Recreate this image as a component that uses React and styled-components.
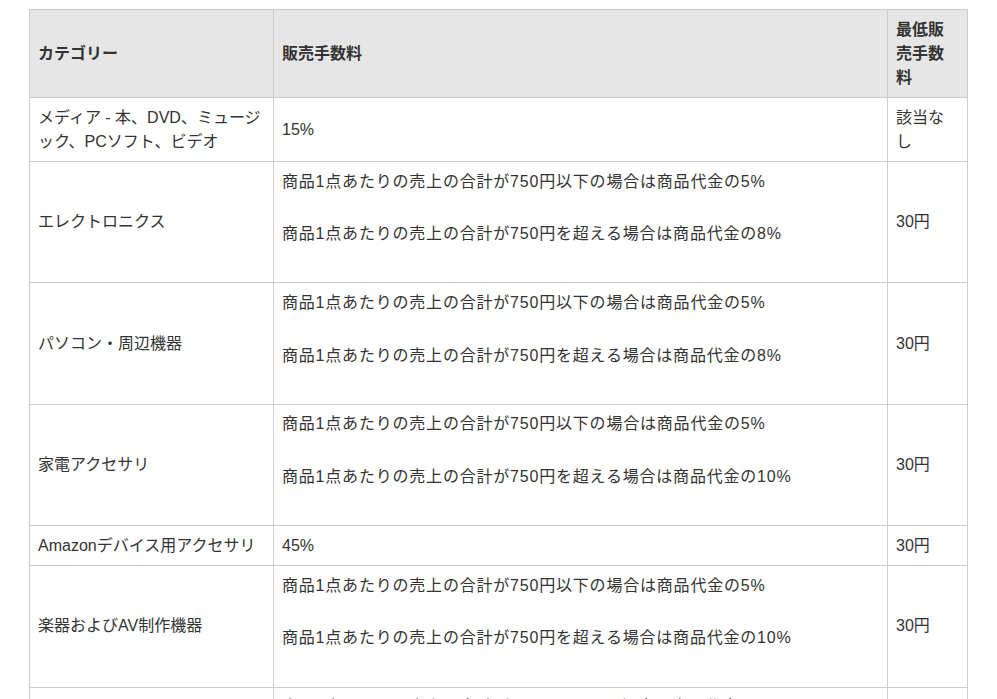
import React from "react";
import styled, { createGlobalStyle } from "styled-components";

const Global = createGlobalStyle`
  html, body { margin: 0; padding: 0; background: #fff; }
  body {
    font-family: "Liberation Sans", "Noto Sans CJK JP", Arial, sans-serif;
    color: #333;
  }
`;

const Page = styled.div`
  padding: 9px 30px 0 29px;
`;

const Table = styled.table`
  width: 939px;
  border-collapse: collapse;
  table-layout: fixed;
  font-size: 16px;
  line-height: 24px;
`;

const Col = styled.col`
  width: ${(p) => p.$w}px;
`;

const Th = styled.th`
  background: #e6e6e6;
  border: 1px solid #ccc;
  padding: 7.5px 8px;
  text-align: left;
  vertical-align: middle;
  font-weight: bold;
  color: #333;
`;

const Td = styled.td`
  border: 1px solid #ccc;
  padding: 7.5px 8px;
  vertical-align: middle;
  color: #333;
`;

const Para = styled.p`
  margin: 0 0 28.7px;
  letter-spacing: 0.8px;
`;

const rows = [
  { cat: "メディア - 本、DVD、ミュージック、PCソフト、ビデオ", fee: ["15%"], min: "該当なし", single: true },
  { cat: "エレクトロニクス", fee: ["商品1点あたりの売上の合計が750円以下の場合は商品代金の5%", "商品1点あたりの売上の合計が750円を超える場合は商品代金の8%"], min: "30円" },
  { cat: "パソコン・周辺機器", fee: ["商品1点あたりの売上の合計が750円以下の場合は商品代金の5%", "商品1点あたりの売上の合計が750円を超える場合は商品代金の8%"], min: "30円" },
  { cat: "家電アクセサリ", fee: ["商品1点あたりの売上の合計が750円以下の場合は商品代金の5%", "商品1点あたりの売上の合計が750円を超える場合は商品代金の10%"], min: "30円" },
  { cat: "Amazonデバイス用アクセサリ", fee: ["45%"], min: "30円", single: true },
  { cat: "楽器およびAV制作機器", fee: ["商品1点あたりの売上の合計が750円以下の場合は商品代金の5%", "商品1点あたりの売上の合計が750円を超える場合は商品代金の10%"], min: "30円" },
  { cat: "ドラッグストア", fee: ["商品1点あたりの売上の合計が1,500円以下の場合は商品代金の8%", "商品1点あたりの売上の合計が1,500円を超える場合は商品代金の10%"], min: "30円" },
];

export default function App() {
  return (
    <>
      <Global />
      <Page>
        <Table>
          <colgroup>
            <Col $w={244} />
            <Col $w={614} />
            <Col $w={80} />
          </colgroup>
          <thead>
            <tr>
              <Th>カテゴリー</Th>
              <Th>販売手数料</Th>
              <Th>最低販売手数料</Th>
            </tr>
          </thead>
          <tbody>
            {rows.map((r, i) => (
              <tr key={i}>
                <Td>{r.cat}</Td>
                <Td>
                  {r.single
                    ? r.fee[0]
                    : r.fee.map((f, j) => <Para key={j}>{f}</Para>)}
                </Td>
                <Td>{r.min}</Td>
              </tr>
            ))}
          </tbody>
        </Table>
      </Page>
    </>
  );
}
